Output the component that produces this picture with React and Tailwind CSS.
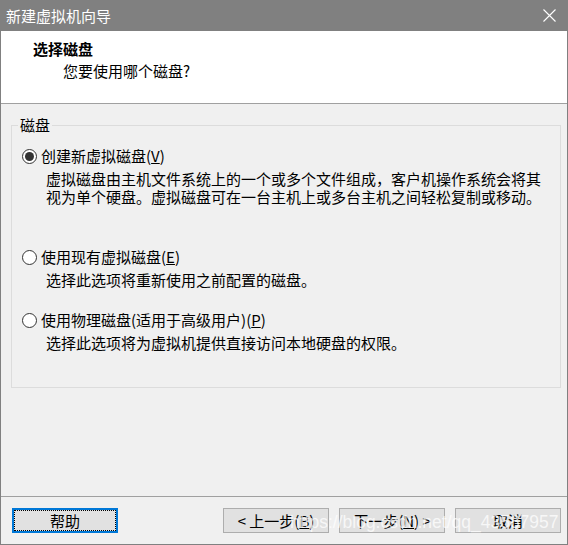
import React from "react";

const font = { fontFamily: '"Noto Sans CJK SC", "Liberation Sans", sans-serif' };

function Radio({ checked }) {
  return (
    <span className="w-[15px] h-[15px] rounded-full border border-[#333] bg-white flex items-center justify-center shrink-0">
      {checked && <span className="w-[9px] h-[9px] rounded-full bg-[#333]" />}
    </span>
  );
}

function Option({ checked, label, keyChar, tail = "", lines, top }) {
  return (
    <div className={top}>
      <div className="flex items-center h-[18px] pl-[10px] gap-[4px]">
        <Radio checked={checked} />
        <span className="text-[15px] leading-[18px] text-black">
          {label}(<span className="underline">{keyChar}</span>){tail}
        </span>
      </div>
      <div className="pl-[34px] mt-[5px] text-[15px] leading-[18px] text-black">
        {lines.map((l, i) => (
          <div key={i}>{l}</div>
        ))}
      </div>
    </div>
  );
}

export default function App() {
  return (
    <div className="w-[568px] h-[545px] flex flex-col bg-[#f0f0f0] relative overflow-hidden" style={font}>
      {/* 标题栏 */}
      <div className="h-[31px] bg-[#808080] flex items-center justify-between pl-[6px] pr-[12px] shrink-0">
        <span className="text-white text-[15px] leading-[18px]">新建虚拟机向导</span>
        <svg width="13" height="13" viewBox="0 0 13 13">
          <path d="M0.5 0.5 L12.5 12.5 M12.5 0.5 L0.5 12.5" stroke="#fff" strokeWidth="1.1" />
        </svg>
      </div>

      <div className="flex-1 flex flex-col border-x border-b border-[#808080]">
        {/* 页头 */}
        <div className="h-[73px] bg-white border-b border-[#a0a0a0] shrink-0 pt-[9px]">
          <div className="pl-[32px] text-[15px] leading-[18px] font-bold text-black">选择磁盘</div>
          <div className="pl-[62px] mt-[4px] text-[15px] leading-[18px] text-black">您要使用哪个磁盘?</div>
        </div>

        {/* 内容 */}
        <div className="flex-1 pt-[12px] pl-[10px] pr-[6px]">
          <fieldset className="border border-[#dcdcdc] h-[272px]">
            <legend className="ml-[6px] px-[2px] text-[15px] leading-[18px] text-black">磁盘</legend>
            <Option
              top="mt-[13px]"
              checked
              label="创建新虚拟磁盘"
              keyChar="V"
              lines={[
                "虚拟磁盘由主机文件系统上的一个或多个文件组成，客户机操作系统会将其",
                "视为单个硬盘。虚拟磁盘可在一台主机上或多台主机之间轻松复制或移动。",
              ]}
            />
            <Option
              top="mt-[42px]"
              label="使用现有虚拟磁盘"
              keyChar="E"
              lines={["选择此选项将重新使用之前配置的磁盘。"]}
            />
            <Option
              top="mt-[22px]"
              label="使用物理磁盘(适用于高级用户)"
              keyChar="P"
              lines={["选择此选项将为虚拟机提供直接访问本地硬盘的权限。"]}
            />
          </fieldset>
        </div>

        {/* 底部按钮 */}
        <div className="h-[48px] border-t border-[#a0a0a0] shrink-0 flex items-start pt-[11px] pl-[11px] pr-[6px]">
          <button className="w-[106px] h-[25px] border-2 border-[#0078d7] bg-[#e1e1e1]">
            <span className="block w-full h-full border border-dotted border-black text-[15px] leading-[19px] text-black">帮助</span>
          </button>
          <div className="flex-1" />
          <div className="flex gap-[10px]">
            <button className="w-[106px] h-[25px] border border-[#adadad] bg-[#e1e1e1] text-[15px] leading-[18px] text-black">
              &lt; 上一步(<span className="underline">B</span>)
            </button>
            <button className="w-[106px] h-[25px] border border-[#adadad] bg-[#e1e1e1] text-[15px] leading-[18px] text-black">
              下一步(<span className="underline">N</span>) &gt;
            </button>
            <button className="w-[106px] h-[25px] border border-[#adadad] bg-[#e1e1e1] text-[15px] leading-[18px] text-black">
              取消
            </button>
          </div>
        </div>
      </div>

      {/* 水印 */}
      <div
        className="absolute left-[290px] top-[510px] text-[17.5px] leading-[24px] text-white/75 pointer-events-none"
        style={{ fontFamily: '"Liberation Sans", sans-serif' }}
      >
        https://blog.csdn.net/qq_43587957
      </div>
    </div>
  );
}
